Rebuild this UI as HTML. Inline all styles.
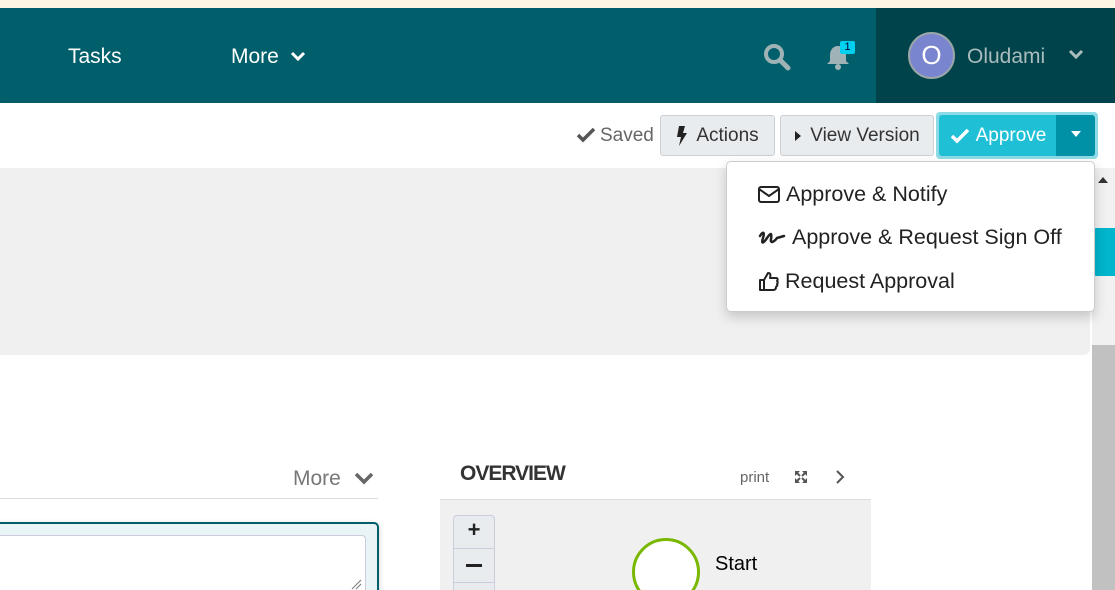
<!DOCTYPE html>
<html><head><meta charset="utf-8"><style>
*{box-sizing:border-box;margin:0;padding:0}
html,body{width:1115px;height:590px;overflow:hidden}
body{position:relative;font-family:"Liberation Sans",sans-serif;background:#fff}
.a{position:absolute}
.btn{position:absolute;top:115px;height:41px;border:1px solid #ccd0d4;border-radius:3px;background:#e9ecef;color:#333;font-size:19px;display:flex;align-items:center;justify-content:center;gap:8px}
.mi{position:absolute;left:758px;font-size:21.5px;color:#222;display:flex;align-items:center;gap:6px}
</style></head><body>
<div class="a" style="left:0;top:0;width:1115px;height:8px;background:#fdf6e4"></div>
<div class="a" style="left:0;top:8px;width:876px;height:95px;background:#005f6b"></div>
<div class="a" style="left:876px;top:8px;width:239px;height:95px;background:#00434a"></div>
<div class="a" style="left:68px;top:45px;color:#fff;font-size:21px">Tasks</div>
<div class="a" style="left:231px;top:45px;color:#fff;font-size:21px">More</div>
<svg class="a" style="left:290px;top:49px" width="16" height="14" viewBox="0 0 16 14"><path d="M2 4l6 6 6-6" stroke="#fff" stroke-width="3" fill="none"/></svg>
<svg class="a" style="left:762px;top:42px" width="30" height="30" viewBox="0 0 30 30"><circle cx="12" cy="12" r="8" stroke="#9fb3b6" stroke-width="4" fill="none"/><path d="M18 18l8 8" stroke="#9fb3b6" stroke-width="5" stroke-linecap="round"/></svg>
<svg class="a" style="left:824px;top:42px" width="30" height="30" viewBox="0 0 30 30"><path d="M14 4c-5 0-8 4-8 9v6l-3 3h22l-3-3v-6c0-5-3-9-8-9z" fill="#9fb3b6"/><circle cx="14" cy="25" r="3" fill="#9fb3b6"/></svg>
<div class="a" style="left:840px;top:41px;width:15px;height:13px;background:#00d0f0;color:#003;font-size:11px;text-align:center;line-height:13px;border-radius:2px">1</div>
<div class="a" style="left:908px;top:32px;width:47px;height:47px;border-radius:50%;background:#7a85cf;border:2px solid #9aa6a8;color:#fff;font-size:26px;text-align:center;line-height:43px">O</div>
<div class="a" style="left:967px;top:45px;color:#a9bcbe;font-size:21px">Oludami</div>
<svg class="a" style="left:1068px;top:48px" width="16" height="14" viewBox="0 0 16 14"><path d="M2 3l6 6 6-6" stroke="#a9bcbe" stroke-width="3" fill="none"/></svg>
<div class="a" style="left:0;top:103px;width:1115px;height:65px;background:#fff;box-shadow:0 2px 4px rgba(0,0,0,.15)"></div>
<div class="a" style="left:0;top:168px;width:1090px;height:187px;background:#f0f0f0;border-radius:0 0 6px 0"></div>
<div class="a" style="left:1092px;top:168px;width:23px;height:422px;background:#f1f1f1"></div>
<div class="a" style="left:1092px;top:345px;width:23px;height:245px;background:#c1c1c1"></div>
<svg class="a" style="left:1097px;top:176px" width="12" height="8"><path d="M1 7l5-6 5 6z" fill="#333"/></svg>
<div class="a" style="left:1093px;top:228px;width:22px;height:48px;background:#00b5cc;border-radius:4px 0 0 4px"></div>
<svg class="a" style="left:576px;top:126px" width="20" height="18" viewBox="0 0 20 18"><path d="M2 9l5 5 11-11" stroke="#555" stroke-width="3.5" fill="none"/></svg>
<div class="a" style="left:600px;top:125px;font-size:19px;color:#666">Saved</div>
<div class="btn" style="left:660px;width:115px"><svg width="12" height="20" viewBox="0 0 12 20"><path d="M3 0h6l-2 7h4l-8 13 2-9H1z" fill="#222"/></svg>Actions</div>
<div class="btn" style="left:780px;width:154px"><svg width="8" height="12"><path d="M1 1l6 5-6 5z" fill="#222"/></svg>View Version</div>
<div class="a" style="left:936px;top:112px;width:162px;height:47px;border-radius:4px;background:#8ddbe6"></div>
<div class="a" style="left:939px;top:115px;width:118px;height:41px;background:#1fbfd6;border-radius:3px 0 0 3px;color:#fff;font-size:19px;display:flex;align-items:center;justify-content:center;gap:6px"><svg width="20" height="18" viewBox="0 0 20 18"><path d="M2 9l5 5 11-11" stroke="#fff" stroke-width="3.5" fill="none"/></svg>Approve</div>
<div class="a" style="left:1056px;top:115px;width:39px;height:41px;background:#0091a6;border-radius:0 3px 3px 0"></div>
<svg class="a" style="left:1071px;top:131px" width="10" height="6"><path d="M0 0h10l-5 6z" fill="#fff"/></svg>
<div class="a" style="left:726px;top:161px;width:369px;height:151px;background:#fff;border:1px solid #ccc;border-radius:5px;box-shadow:0 5px 12px rgba(0,0,0,.18)"></div>
<div class="mi" style="top:182px"><svg width="22" height="17" viewBox="0 0 22 17"><rect x="1" y="1" width="20" height="15" rx="2" stroke="#222" stroke-width="2" fill="none"/><path d="M1 3l10 7 10-7" stroke="#222" stroke-width="2" fill="none"/></svg>Approve &amp; Notify</div>
<div class="mi" style="top:225px"><svg width="28" height="16" viewBox="0 0 28 16"><path d="M2 6c3-5 5-4 3 2-2 6 0 6 4 0s5-5 4 1c-1 5 3 3 6-1l7-2" stroke="#222" stroke-width="2.5" fill="none" stroke-linecap="round"/></svg>Approve &amp; Request Sign Off</div>
<div class="mi" style="top:269px"><svg width="21" height="21" viewBox="0 0 21 21"><path d="M2 9h4v10H2zM6 9l4-7c2 0 3 1 2 5h6c2 0 2 2 1 3 1 1 1 2 0 3 1 1 0 2-1 3 0 2-1 3-3 3H6" stroke="#222" stroke-width="2" fill="none" stroke-linejoin="round"/></svg>Request Approval</div>
<div class="a" style="left:293px;top:467px;font-size:21px;color:#777">More</div>
<svg class="a" style="left:353px;top:470px" width="22" height="16" viewBox="0 0 22 16"><path d="M3 4l8 8 8-8" stroke="#666" stroke-width="3.5" fill="none"/></svg>
<div class="a" style="left:0;top:498px;width:378px;height:1px;background:#ddd"></div>
<div class="a" style="left:-10px;top:522px;width:389px;height:80px;border:2px solid #005f6b;border-radius:5px;background:#e8f4f6;box-shadow:0 2px 6px rgba(0,0,0,.2)"></div>
<div class="a" style="left:-5px;top:535px;width:371px;height:70px;border:1px solid #ccd;border-radius:4px;background:#fff"></div>
<svg class="a" style="left:350px;top:578px" width="12" height="12"><path d="M2 11l9-9M6 11l5-5" stroke="#777" stroke-width="1"/></svg>
<div class="a" style="left:460px;top:462px;font-size:21px;color:#333;font-weight:bold;letter-spacing:-1px">OVERVIEW</div>
<div class="a" style="left:740px;top:469px;font-size:15px;color:#666">print</div>
<svg class="a" style="left:794px;top:470px" width="14" height="14" viewBox="0 0 14 14"><path d="M1 1h5L1 6zM13 1v5L8 1zM1 13V8l5 5zM13 13H8l5-5z" fill="#555"/><path d="M3 3l3 3M11 3l-3 3M3 11l3-3M11 11l-3-3" stroke="#555" stroke-width="2"/></svg>
<svg class="a" style="left:834px;top:469px" width="12" height="16"><path d="M3 2l6 6-6 6" stroke="#555" stroke-width="2" fill="none"/></svg>
<div class="a" style="left:440px;top:499px;width:431px;height:91px;background:#f0f0f0;border-top:1px solid #ddd"></div>
<div class="a" style="left:453px;top:515px;width:42px;height:80px;border:1px solid #ccd;border-radius:4px;background:#e9ecef"></div>
<div class="a" style="left:453px;top:548px;width:42px;height:1px;background:#ccd"></div>
<div class="a" style="left:453px;top:582px;width:42px;height:1px;background:#ccd"></div>
<div class="a" style="left:453px;top:517px;width:42px;text-align:center;font-size:22px;font-weight:bold;color:#222">+</div>
<div class="a" style="left:466px;top:564px;width:16px;height:3px;background:#222"></div>
<div class="a" style="left:632px;top:538px;width:68px;height:68px;border-radius:50%;border:3px solid #7ab800;background:#fff"></div>
<div class="a" style="left:715px;top:553px;font-size:20px;color:#000">Start</div>
</body></html>
